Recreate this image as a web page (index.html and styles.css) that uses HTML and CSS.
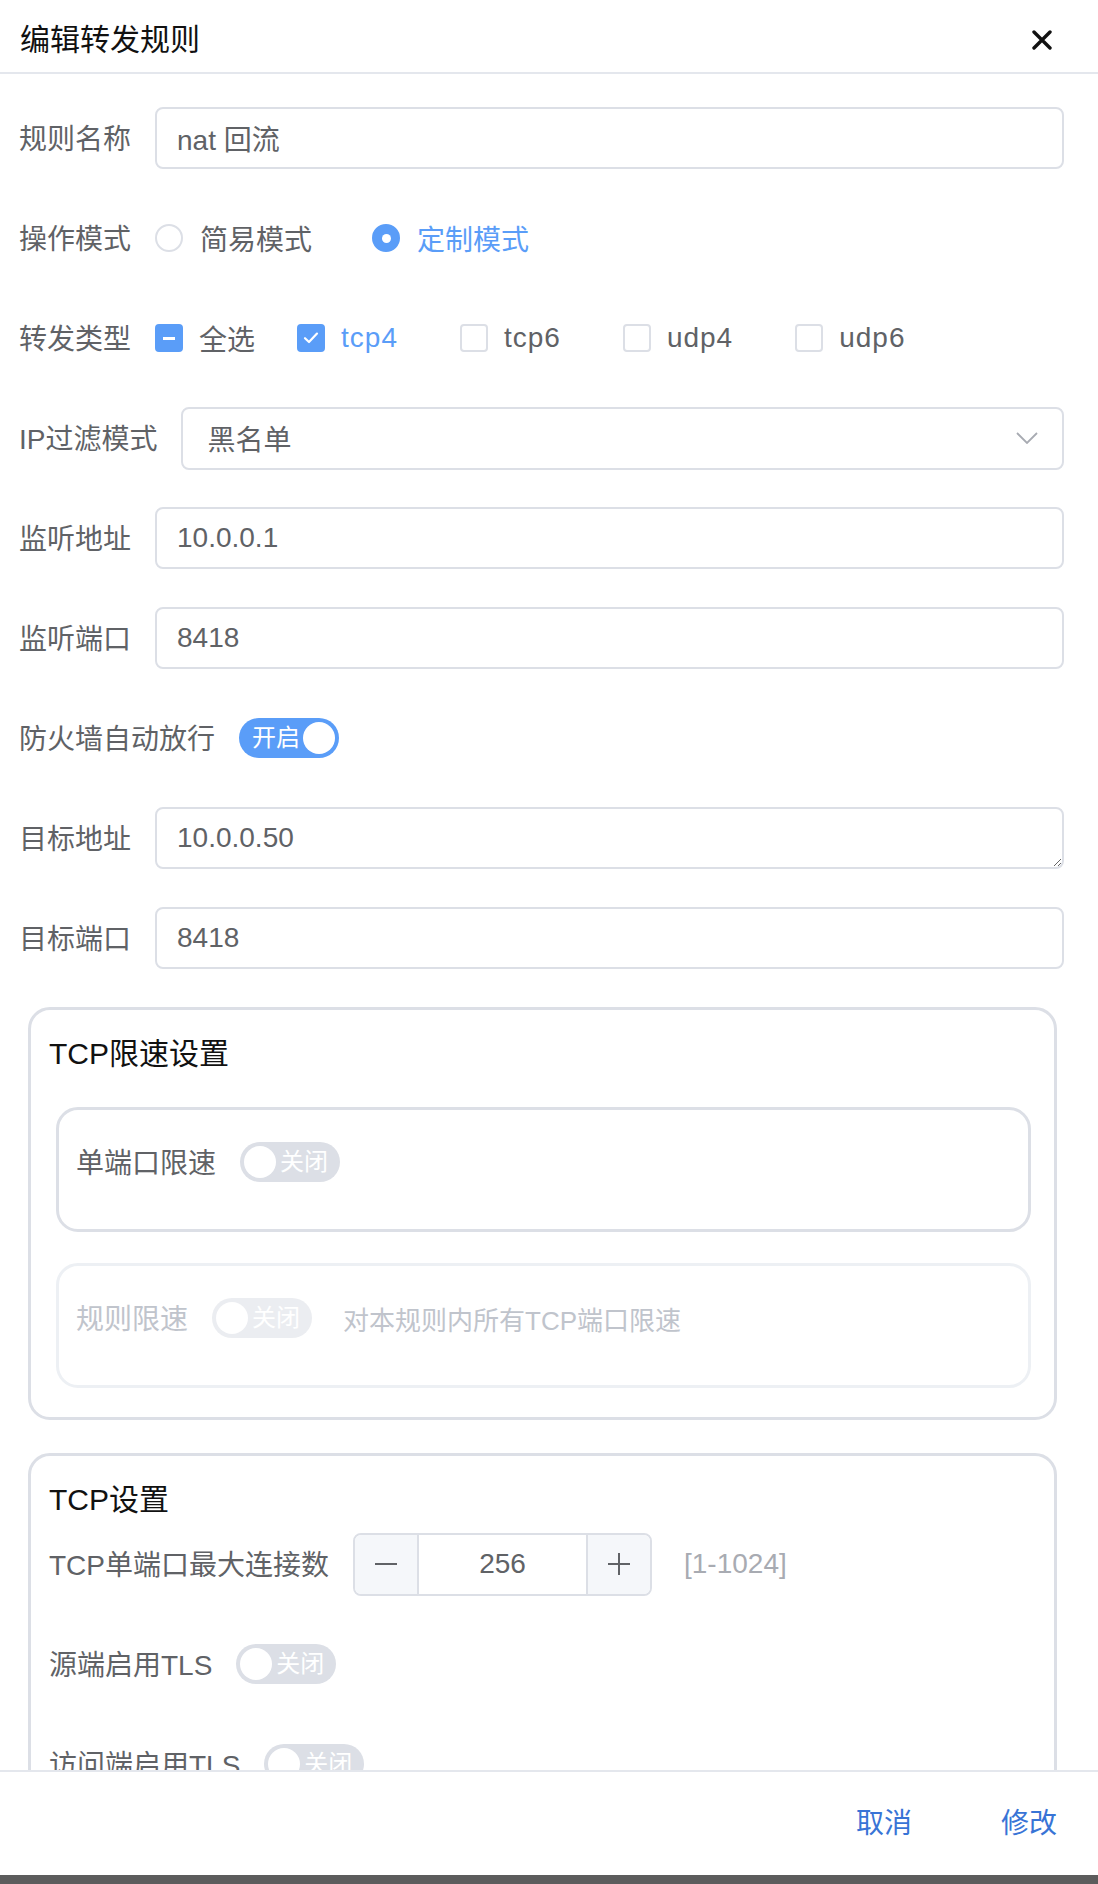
FILE: index.html
```html
<!DOCTYPE html>
<html lang="zh-CN">
<head>
<meta charset="utf-8">
<title>编辑转发规则</title>
<link rel="stylesheet" href="styles.css">
</head>
<body>
<div class="dialog">
  <header class="dlg-header">
    <span class="dlg-title">编辑转发规则</span>
    <button class="close-btn" type="button" aria-label="关闭">
      <svg width="20" height="20" viewBox="0 0 20 20"><path d="M2 2 L18 18 M18 2 L2 18" stroke="#111" stroke-width="3.4" stroke-linecap="round" fill="none"/></svg>
    </button>
  </header>

  <div class="dlg-body">
    <form class="form">
      <div class="item">
        <label class="lbl">规则名称</label>
        <div class="ctl"><input class="input" type="text" value="nat 回流"></div>
      </div>

      <div class="item">
        <label class="lbl">操作模式</label>
        <div class="radio-group">
          <span class="radio"><span class="radio-dot"></span><span class="radio-text">简易模式</span></span>
          <span class="radio is-checked"><span class="radio-dot"></span><span class="radio-text">定制模式</span></span>
        </div>
      </div>

      <div class="item">
        <label class="lbl">转发类型</label>
        <div class="check-group">
          <span class="check check-all is-checked"><span class="check-box"><span class="indet-bar"></span></span><span class="check-text plain">全选</span></span>
          <span class="check is-checked"><span class="check-box"><svg width="16" height="14" viewBox="0 0 16 14"><path d="M2 7.2 L6 11 L14 2.6" stroke="#fff" stroke-width="2.2" fill="none" stroke-linecap="round" stroke-linejoin="round"/></svg></span><span class="check-text latin">tcp4</span></span>
          <span class="check"><span class="check-box"></span><span class="check-text latin">tcp6</span></span>
          <span class="check"><span class="check-box"></span><span class="check-text latin">udp4</span></span>
          <span class="check"><span class="check-box"></span><span class="check-text latin">udp6</span></span>
        </div>
      </div>

      <div class="item">
        <label class="lbl">IP过滤模式</label>
        <div class="ctl">
          <div class="select">
            <span class="select-text">黑名单</span>
            <svg class="select-arrow" width="22" height="12" viewBox="0 0 22 12"><path d="M1 1 L11 11 L21 1" stroke="#a8abb2" stroke-width="1.8" fill="none"/></svg>
          </div>
        </div>
      </div>

      <div class="item">
        <label class="lbl">监听地址</label>
        <div class="ctl"><input class="input" type="text" value="10.0.0.1"></div>
      </div>

      <div class="item">
        <label class="lbl">监听端口</label>
        <div class="ctl"><input class="input" type="text" value="8418"></div>
      </div>

      <div class="item">
        <label class="lbl">防火墙自动放行</label>
        <span class="switch is-on"><span class="switch-text">开启</span><span class="knob"></span></span>
      </div>

      <div class="item">
        <label class="lbl">目标地址</label>
        <div class="ctl"><textarea class="textarea" rows="1">10.0.0.50</textarea></div>
      </div>

      <div class="item">
        <label class="lbl">目标端口</label>
        <div class="ctl"><input class="input" type="text" value="8418"></div>
      </div>

      <section class="card">
        <div class="card-title">TCP限速设置</div>
        <div class="sub-card">
          <div class="row">
            <label class="lbl">单端口限速</label>
            <span class="switch"><span class="knob"></span><span class="switch-text">关闭</span></span>
          </div>
        </div>
        <div class="sub-card is-disabled">
          <div class="row">
            <label class="lbl">规则限速</label>
            <span class="switch"><span class="knob"></span><span class="switch-text">关闭</span></span>
            <span class="hint">对本规则内所有TCP端口限速</span>
          </div>
        </div>
      </section>

      <section class="card card-tcp">
        <div class="card-title">TCP设置</div>
        <div class="row row-first">
          <label class="lbl">TCP单端口最大连接数</label>
          <div class="num-input">
            <span class="num-btn num-minus"><svg width="24" height="24" viewBox="0 0 24 24"><path d="M1 12 H23" stroke="#606266" stroke-width="2"/></svg></span>
            <span class="num-value">256</span>
            <span class="num-btn num-plus"><svg width="24" height="24" viewBox="0 0 24 24"><path d="M1 12 H23 M12 1 V23" stroke="#606266" stroke-width="2"/></svg></span>
          </div>
          <span class="range">[1-1024]</span>
        </div>
        <div class="row">
          <label class="lbl">源端启用TLS</label>
          <span class="switch"><span class="knob"></span><span class="switch-text">关闭</span></span>
        </div>
        <div class="row">
          <label class="lbl">访问端启用TLS</label>
          <span class="switch"><span class="knob"></span><span class="switch-text">关闭</span></span>
        </div>
      </section>
    </form>
  </div>

  <footer class="dlg-footer">
    <button class="text-btn" type="button">取消</button>
    <button class="text-btn" type="button">修改</button>
  </footer>
  <div class="bottom-bar"></div>
</div>
</body>
</html>
```

FILE: styles.css
```css
* { box-sizing: border-box; }

html, body {
  margin: 0;
  padding: 0;
  background: #fff;
}

body {
  font-family: "Liberation Sans", "Noto Sans CJK SC", sans-serif;
  color: #606266;
}

.dialog {
  height: 100vh;
  display: flex;
  flex-direction: column;
  overflow: hidden;
}

/* header */
.dlg-header {
  flex: none;
  height: 74px;
  padding: 8px 46px 0 20px;
  border-bottom: 2px solid #e4e7ed;
  display: flex;
  align-items: center;
  justify-content: space-between;
}

.dlg-title {
  font-size: 30px;
  line-height: 40px;
  color: #111;
}

.close-btn {
  border: 0;
  background: none;
  padding: 0;
  width: 20px;
  height: 20px;
  display: flex;
}

/* body */
.dlg-body {
  flex: 1;
  min-height: 0;
  overflow: hidden;
  padding: 33px 34px 0 19px;
}

.form { margin: 0; }

.item {
  display: flex;
  align-items: center;
  height: 62px;
  margin-bottom: 38px;
}

.lbl {
  flex: none;
  font-size: 28px;
  line-height: 58px;
  padding-top: 4px;
  color: #606266;
  padding-right: 24px;
  white-space: nowrap;
}

.ctl { flex: 1; min-width: 0; }

.input,
.textarea {
  display: block;
  width: 100%;
  height: 62px;
  border: 2px solid #dcdfe6;
  border-radius: 8px;
  padding: 0 20px;
  font-family: "Liberation Sans", "Noto Sans CJK SC", sans-serif;
  font-size: 28px;
  color: #606266;
  background: #fff;
  outline: none;
  margin: 0;
}

.textarea {
  padding: 11px 20px;
  line-height: 36px;
  resize: vertical;
  overflow: hidden;
}

/* select */
.select {
  height: 63px;
  border: 2px solid #dcdfe6;
  border-radius: 8px;
  padding: 0 24px 0 24px;
  display: flex;
  align-items: center;
  justify-content: space-between;
}

.select-text {
  font-size: 28px;
  color: #606266;
}

/* radio */
.radio-group { display: flex; align-items: center; }

.radio {
  display: inline-flex;
  align-items: center;
  margin-right: 60px;
}

.radio-dot {
  width: 28px;
  height: 28px;
  border: 2px solid #dcdfe6;
  border-radius: 50%;
  display: flex;
  align-items: center;
  justify-content: center;
  background: #fff;
}

.radio.is-checked .radio-dot {
  background: #5a9df8;
  border-color: #5a9df8;
}

.radio.is-checked .radio-dot::after {
  content: "";
  width: 9px;
  height: 9px;
  border-radius: 50%;
  background: #fff;
}

.radio-text {
  font-size: 28px;
  margin-left: 17px;
  color: #606266;
}

.radio.is-checked .radio-text { color: #5a9df8; }

/* checkbox */
.check-group { display: flex; align-items: center; }

.check {
  display: inline-flex;
  align-items: center;
  margin-right: 62px;
}

.check-all { margin-right: 42px; }

.check-box {
  width: 28px;
  height: 28px;
  border: 2px solid #dcdfe6;
  border-radius: 4px;
  background: #fff;
  display: flex;
  align-items: center;
  justify-content: center;
}

.check.is-checked .check-box {
  background: #5a9df8;
  border-color: #5a9df8;
}

.indet-bar {
  width: 12px;
  height: 3px;
  background: #fff;
}

.check-text {
  font-size: 28px;
  margin-left: 16px;
  color: #606266;
}

.check-text.latin { letter-spacing: 1px; }

.check.is-checked .check-text { color: #5a9df8; }
.check.is-checked .check-text.plain { color: #606266; }

/* switch */
.switch {
  flex: none;
  width: 100px;
  height: 40px;
  border-radius: 20px;
  background: #dcdfe6;
  display: inline-flex;
  align-items: center;
  padding: 0 12px 0 4px;
  gap: 4px;
}

.switch.is-on {
  background: #5a9df8;
  padding: 0 4px 0 13px;
  gap: 3px;
}

.knob {
  flex: none;
  width: 32px;
  height: 32px;
  border-radius: 50%;
  background: #fff;
}

.switch-text {
  font-size: 24px;
  line-height: 40px;
  color: #fff;
  white-space: nowrap;
}

/* cards */
.card {
  border: 3px solid #dcdfe6;
  border-radius: 22px;
  margin: 0 7px 0 9px;
  padding: 24px 23px 29px 18px;
}

.card-tcp {
  margin-top: 33px;
  padding-bottom: 60px;
}

.card-title {
  font-size: 30px;
  line-height: 40px;
  color: #111;
}

.sub-card {
  margin: 33px 0 0 7px;
  border: 3px solid #dcdfe6;
  border-radius: 22px;
  padding: 21px 17px 36px;
}

.sub-card + .sub-card { margin-top: 31px; }

.sub-card.is-disabled { border-color: #edf0f4; }
.sub-card.is-disabled .lbl { color: #c0c4cc; }
.sub-card.is-disabled .switch { opacity: 0.55; }

.row {
  display: flex;
  align-items: center;
  height: 62px;
}

.card-tcp .row { margin-top: 38px; }
.card-tcp .row.row-first { margin-top: 13px; }

.hint {
  font-size: 26px;
  color: #c0c4cc;
  margin-left: 31px;
  white-space: nowrap;
}

/* number input */
.num-input {
  flex: none;
  width: 299px;
  height: 63px;
  border: 2px solid #dcdfe6;
  border-radius: 8px;
  display: flex;
  overflow: hidden;
}

.num-btn {
  width: 64px;
  background: #f5f7fa;
  display: flex;
  align-items: center;
  justify-content: center;
}

.num-minus { border-right: 2px solid #dcdfe6; }
.num-plus { border-left: 2px solid #dcdfe6; }

.num-value {
  flex: 1;
  display: flex;
  align-items: center;
  justify-content: center;
  font-size: 28px;
  color: #606266;
}

.range {
  margin-left: 32px;
  font-size: 28px;
  color: #a8abb2;
}

/* footer */
.dlg-footer {
  flex: none;
  height: 105px;
  border-top: 2px solid #e4e7ed;
  display: flex;
  align-items: center;
  justify-content: flex-end;
  padding: 0 41px 0 0;
  background: #fff;
}

.text-btn {
  border: 0;
  background: none;
  padding: 0;
  font-family: "Liberation Sans", "Noto Sans CJK SC", sans-serif;
  font-size: 28px;
  line-height: 40px;
  color: #3874d6;
  margin-left: 89px;
}

.bottom-bar {
  flex: none;
  height: 9px;
  background: #5c5c5c;
}
```
